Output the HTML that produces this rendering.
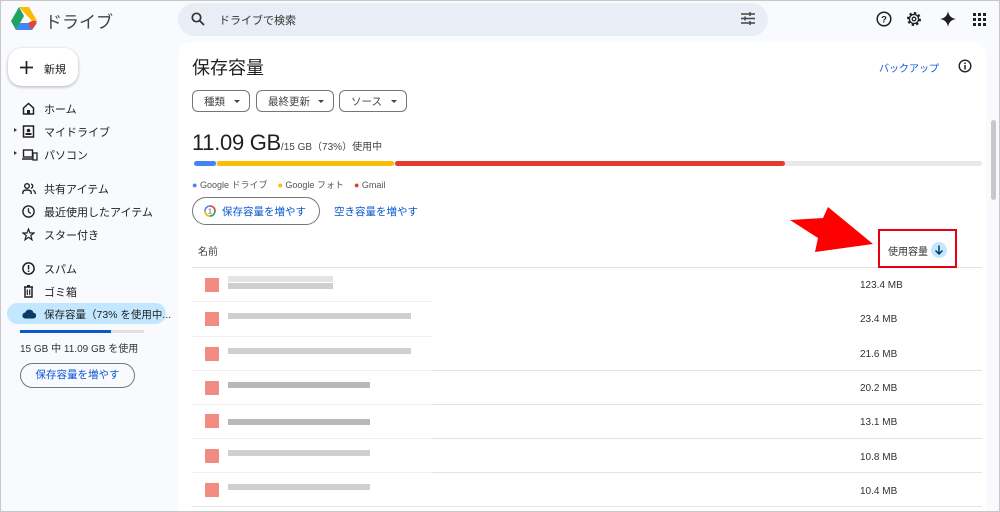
<!DOCTYPE html>
<html><head><meta charset="utf-8"><style>
*{box-sizing:border-box;margin:0;padding:0}
html,body{width:1000px;height:512px;overflow:hidden}
body{background:#f8fafd;font-family:"Liberation Sans","Noto Sans CJK JP",sans-serif;color:#1f1f1f;position:relative}
.frame{position:absolute;left:0;top:0;width:1000px;height:512px;border:1px solid #c8c8c8;pointer-events:none;z-index:5}
.abs{position:absolute}
.nav{position:absolute;left:22px;font-size:11px;color:#1f1f1f}
.nav svg{position:absolute;left:0;top:0}
.nav span{position:absolute;left:22px;top:-1px;white-space:nowrap}
.chip{position:absolute;top:90px;height:22px;border:1px solid #747775;border-radius:6px;font-size:10.5px;color:#444;display:flex;align-items:center;padding-left:11px}
.chip:after{content:"";position:absolute;right:9px;top:9px;border:3px solid transparent;border-top:3.5px solid #444}
.row{position:absolute;left:192px;width:790px;height:1px;background:#e3e3e3}
.sz{position:absolute;left:860px;font-size:10px;color:#333}
.ic{position:absolute;left:205px;width:14px;height:14px;background:#f28b82}
.bl{position:absolute;left:228px;height:6px;background:#cfcfcf}
</style></head><body>
<div class="frame"></div>
<svg class="abs" style="left:11px;top:7px" width="26" height="23" viewBox="0 0 26 23">
<polygon points="8,0 18,0 26,14 21,14" fill="#fbbc04"/>
<polygon points="8,0 13,9 5,23 0,14" fill="#1ea362"/>
<polygon points="5,23 9,16 26,16 21,23" fill="#4285f4"/>
<polygon points="21,14 26,14 21,23 17,16" fill="#ea4335"/>
</svg>
<div class="abs" style="left:45px;top:8px;font-size:17px;color:#444">ドライブ</div>
<div class="abs" style="left:178px;top:3px;width:590px;height:33px;background:#e9eef6;border-radius:17px"></div>
<svg class="abs" style="left:191px;top:12px" width="14" height="14" viewBox="0 0 14 14"><circle cx="5.5" cy="5.5" r="4.2" fill="none" stroke="#333" stroke-width="1.7"/><line x1="8.5" y1="8.5" x2="13" y2="13" stroke="#333" stroke-width="1.8"/></svg>
<div class="abs" style="left:219px;top:12px;font-size:11px;color:#333">ドライブで検索</div>
<svg class="abs" style="left:741px;top:12px" width="14" height="13" viewBox="0 0 14 13" stroke="#444" stroke-width="1.5"><line x1="0" y1="2" x2="14" y2="2"/><line x1="0" y1="6.5" x2="14" y2="6.5"/><line x1="0" y1="11" x2="14" y2="11"/><line x1="9" y1="0" x2="9" y2="4" /><line x1="4" y1="4.5" x2="4" y2="8.5"/><line x1="9" y1="9" x2="9" y2="13"/></svg>
<svg class="abs" style="left:876px;top:11px" width="16" height="16" viewBox="0 0 16 16"><circle cx="8" cy="8" r="6.8" fill="none" stroke="#222" stroke-width="1.5"/><text x="8" y="11.5" font-size="9.5" text-anchor="middle" fill="#222" font-family="Liberation Sans" font-weight="bold">?</text></svg>
<svg class="abs" style="left:906px;top:11px" width="16" height="16" viewBox="0 0 16 16"><circle cx="8" cy="8" r="5.8" fill="none" stroke="#222" stroke-width="2.4" stroke-dasharray="2.3 2.2"/><circle cx="8" cy="8" r="4.6" fill="none" stroke="#222" stroke-width="1.4"/><circle cx="8" cy="8" r="1.8" fill="none" stroke="#222" stroke-width="1.3"/></svg>
<svg class="abs" style="left:940px;top:11px" width="16" height="16" viewBox="0 0 16 16"><path d="M8 0Q9 7 16 8Q9 9 8 16Q7 9 0 8Q7 7 8 0Z" fill="#1f1f1f"/></svg>
<svg class="abs" style="left:973px;top:13px" width="13" height="13" viewBox="0 0 13 13" fill="#222"><rect x="0" y="0" width="3" height="3"/><rect x="5" y="0" width="3" height="3"/><rect x="10" y="0" width="3" height="3"/><rect x="0" y="5" width="3" height="3"/><rect x="5" y="5" width="3" height="3"/><rect x="10" y="5" width="3" height="3"/><rect x="0" y="10" width="3" height="3"/><rect x="5" y="10" width="3" height="3"/><rect x="10" y="10" width="3" height="3"/></svg>
<div class="abs" style="left:8px;top:48px;width:70px;height:38px;background:#fff;border-radius:14px;box-shadow:0 1px 3px rgba(0,0,0,.3)"></div>
<svg class="abs" style="left:20px;top:61px" width="13" height="13" viewBox="0 0 13 13"><path d="M6.5 0V13M0 6.5H13" stroke="#222" stroke-width="1.7"/></svg>
<div class="abs" style="left:44px;top:61px;font-size:11px">新規</div>
<div class="nav" style="top:102px"><svg width="13" height="13" viewBox="0 0 13 13"><path d="M1.5 6L6.5 1.5 11.5 6V12H1.5Z" fill="none" stroke="#222" stroke-width="1.5"/><rect x="5" y="8" width="3" height="4" fill="#222"/></svg><span>ホーム</span></div>
<div class="abs" style="left:14px;top:128px;border:2.5px solid transparent;border-left:3px solid #333"></div>
<div class="nav" style="top:125px"><svg width="13" height="13" viewBox="0 0 13 13"><rect x="1.5" y="1" width="10" height="11" fill="none" stroke="#222" stroke-width="1.5"/><circle cx="6.5" cy="5.5" r="1.8" fill="#222"/><rect x="3.5" y="8" width="6" height="2" fill="#222"/></svg><span>マイドライブ</span></div>
<div class="abs" style="left:14px;top:151px;border:2.5px solid transparent;border-left:3px solid #333"></div>
<div class="nav" style="top:148px"><svg width="16" height="13" viewBox="0 0 16 13"><rect x="1.5" y="2" width="9" height="7" fill="none" stroke="#222" stroke-width="1.4"/><line x1="0" y1="11" x2="11" y2="11" stroke="#222" stroke-width="1.5"/><rect x="11" y="5" width="4" height="7" fill="none" stroke="#222" stroke-width="1.3"/></svg><span>パソコン</span></div>
<div class="nav" style="top:182px"><svg width="14" height="13" viewBox="0 0 14 13"><circle cx="5" cy="4" r="2.3" fill="none" stroke="#222" stroke-width="1.4"/><path d="M0.8 12V10.5Q0.8 8 5 8Q9.2 8 9.2 10.5V12" fill="none" stroke="#222" stroke-width="1.4"/><path d="M9 2A2.2 2.2 0 0 1 9 6.3M11 8.3Q13.3 9 13.3 12" fill="none" stroke="#222" stroke-width="1.3"/></svg><span>共有アイテム</span></div>
<div class="nav" style="top:205px"><svg width="13" height="13" viewBox="0 0 13 13"><circle cx="6.5" cy="6.5" r="5.6" fill="none" stroke="#222" stroke-width="1.4"/><path d="M6.5 3.2V6.8L8.8 8.5" fill="none" stroke="#222" stroke-width="1.3"/></svg><span>最近使用したアイテム</span></div>
<div class="nav" style="top:228px"><svg width="13" height="13" viewBox="0 0 13 13"><path d="M6.5 1L8 5H12L8.8 7.5 10 11.8 6.5 9.3 3 11.8 4.2 7.5 1 5H5Z" fill="none" stroke="#222" stroke-width="1.2"/></svg><span>スター付き</span></div>
<div class="nav" style="top:262px"><svg width="13" height="13" viewBox="0 0 13 13"><circle cx="6.5" cy="6.5" r="5.6" fill="none" stroke="#222" stroke-width="1.5"/><rect x="5.8" y="3" width="1.5" height="4.5" fill="#222"/><rect x="5.8" y="8.5" width="1.5" height="1.5" fill="#222"/></svg><span>スパム</span></div>
<div class="nav" style="top:285px"><svg width="13" height="13" viewBox="0 0 13 13"><path d="M2 2H11M3 2.5V12H10V2.5M5 0.8H8" fill="none" stroke="#222" stroke-width="1.5"/><line x1="5.3" y1="4.5" x2="5.3" y2="10" stroke="#222" stroke-width="1.2"/><line x1="7.7" y1="4.5" x2="7.7" y2="10" stroke="#222" stroke-width="1.2"/></svg><span>ゴミ箱</span></div>
<div class="abs" style="left:7px;top:303px;width:159px;height:21px;background:#c2e7ff;border-radius:11px"></div>
<div class="nav" style="top:308px;font-size:10.5px"><svg width="14" height="11" viewBox="0 0 14 11"><path d="M3.5 10.5A3 3 0 0 1 3.3 4.5 4.3 4.3 0 0 1 11.5 4.7 2.9 2.9 0 0 1 11 10.5Z" fill="#0b3a63"/></svg><span>保存容量（73% を使用中...</span></div>
<div class="abs" style="left:20px;top:330px;width:124px;height:3px;background:#e0e0e0"></div>
<div class="abs" style="left:20px;top:330px;width:91px;height:3px;background:#0b57d0"></div>
<div class="abs" style="left:20px;top:340px;font-size:10px;color:#333">15 GB 中 11.09 GB を使用</div>
<div class="abs" style="left:20px;top:363px;width:115px;height:25px;border:1px solid #747775;border-radius:13px;font-size:10.5px;color:#0b57d0;text-align:center;line-height:23px">保存容量を増やす</div>
<div class="abs" style="left:178px;top:42px;width:808px;height:470px;background:#fff;border-radius:14px 14px 0 0"></div>
<div class="abs" style="left:192px;top:54px;font-size:18px;color:#1f1f1f">保存容量</div>
<div class="abs" style="left:879px;top:60px;font-size:10px;color:#0b57d0">バックアップ</div>
<svg class="abs" style="left:958px;top:59px" width="14" height="14" viewBox="0 0 14 14"><circle cx="7" cy="7" r="5.8" fill="none" stroke="#222" stroke-width="1.4"/><rect x="6.3" y="6" width="1.5" height="4.5" fill="#222"/><rect x="6.3" y="3.5" width="1.5" height="1.5" fill="#222"/></svg>
<div class="chip" style="left:192px;width:58px">種類</div>
<div class="chip" style="left:256px;width:78px">最終更新</div>
<div class="chip" style="left:339px;width:68px">ソース</div>
<div class="abs" style="left:192px;top:130px;font-size:22px;color:#1f1f1f;letter-spacing:-0.3px">11.09 GB<span style="font-size:10px;color:#444;letter-spacing:0">/15 GB（73%）使用中</span></div>
<div class="abs" style="left:194px;top:161px;width:788px;height:5px;background:#e8e8e8;border-radius:3px"></div>
<div class="abs" style="left:194px;top:161px;width:22px;height:5px;background:#4285f4;border-radius:3px"></div>
<div class="abs" style="left:217px;top:161px;width:177px;height:5px;background:#fbbc04;border-radius:3px"></div>
<div class="abs" style="left:395px;top:161px;width:390px;height:5px;background:#e33b2e;border-radius:3px"></div>
<div class="abs" style="left:192px;top:178px;font-size:9px;color:#555;white-space:nowrap"><span style="color:#4285f4">●</span> Google ドライブ &nbsp;&nbsp;&nbsp;<span style="color:#fbbc04">●</span> Google フォト &nbsp;&nbsp;&nbsp;<span style="color:#e33b2e">●</span> Gmail</div>
<div class="abs" style="left:192px;top:197px;width:128px;height:28px;border:1px solid #747775;border-radius:14px"></div>
<svg class="abs" style="left:204px;top:205px" width="12" height="12" viewBox="0 0 12 12"><circle cx="6" cy="6" r="5" fill="none" stroke="#4285f4" stroke-width="1.5"/><path d="M6 1A5 5 0 0 1 11 6" fill="none" stroke="#ea4335" stroke-width="1.5"/><path d="M11 6A5 5 0 0 1 6 11" fill="none" stroke="#34a853" stroke-width="1.5"/><path d="M6 11A5 5 0 0 1 1 6" fill="none" stroke="#fbbc04" stroke-width="1.5"/><text x="6" y="8.5" font-size="7" text-anchor="middle" fill="#444" font-family="Liberation Sans">1</text></svg>
<div class="abs" style="left:222px;top:204px;font-size:10.5px;color:#0b57d0">保存容量を増やす</div>
<div class="abs" style="left:334px;top:204px;font-size:10.5px;color:#0b57d0">空き容量を増やす</div>
<div class="abs" style="left:198px;top:243px;font-size:10px;color:#444">名前</div>
<div class="row" style="top:267px"></div>
<div class="abs" style="left:878px;top:229px;width:79px;height:39px;border:2.5px solid #e60012"></div>
<div class="abs" style="left:888px;top:243px;font-size:10px;color:#333">使用容量</div>
<div class="abs" style="left:931px;top:242px;width:16px;height:16px;border-radius:8px;background:#c2e7ff"></div>
<svg class="abs" style="left:933px;top:244px" width="12" height="12" viewBox="0 0 12 12"><path d="M6 1.5V10M2.5 6.5L6 10 9.5 6.5" fill="none" stroke="#0b3a63" stroke-width="1.5"/></svg>
<svg class="abs" style="left:0;top:0" width="1000" height="512"><polygon points="790,220 823,218 828,207 873,244 815,252 818,238" fill="#ff0000"/></svg>
<div class="ic" style="top:278px"></div><div class="bl" style="top:276px;width:105px;background:#e4e4e4"></div><div class="bl" style="top:283px;width:105px"></div><div class="sz" style="top:280px">123.4 MB</div>
<div class="row" style="top:301px;width:240px;background:#efefef"></div>
<div class="ic" style="top:312px"></div><div class="bl" style="top:313px;width:183px"></div><div class="sz" style="top:314px">23.4 MB</div>
<div class="row" style="top:336px;width:240px;background:#efefef"></div>
<div class="ic" style="top:347px"></div><div class="bl" style="top:348px;width:183px"></div><div class="sz" style="top:349px">21.6 MB</div>
<div class="row" style="top:370px;width:240px;background:#efefef"></div><div class="row" style="top:370px;left:432px;width:550px"></div>
<div class="ic" style="top:381px"></div><div class="bl" style="top:382px;width:142px;background:#b8b8b8"></div><div class="sz" style="top:383px">20.2 MB</div>
<div class="row" style="top:404px;width:240px;background:#efefef"></div><div class="row" style="top:404px;left:432px;width:550px"></div>
<div class="ic" style="top:414px"></div><div class="bl" style="top:419px;width:142px;background:#b8b8b8"></div><div class="sz" style="top:417px">13.1 MB</div>
<div class="row" style="top:438px;width:240px;background:#efefef"></div><div class="row" style="top:438px;left:432px;width:550px"></div>
<div class="ic" style="top:449px"></div><div class="bl" style="top:450px;width:142px"></div><div class="sz" style="top:452px">10.8 MB</div>
<div class="row" style="top:472px;width:240px;background:#efefef"></div><div class="row" style="top:472px;left:432px;width:550px"></div>
<div class="ic" style="top:483px"></div><div class="bl" style="top:484px;width:142px"></div><div class="sz" style="top:486px">10.4 MB</div>
<div class="row" style="top:506px"></div>
<div class="abs" style="left:991px;top:120px;width:5px;height:80px;background:#c8c8c8;border-radius:3px"></div>
</body></html>
